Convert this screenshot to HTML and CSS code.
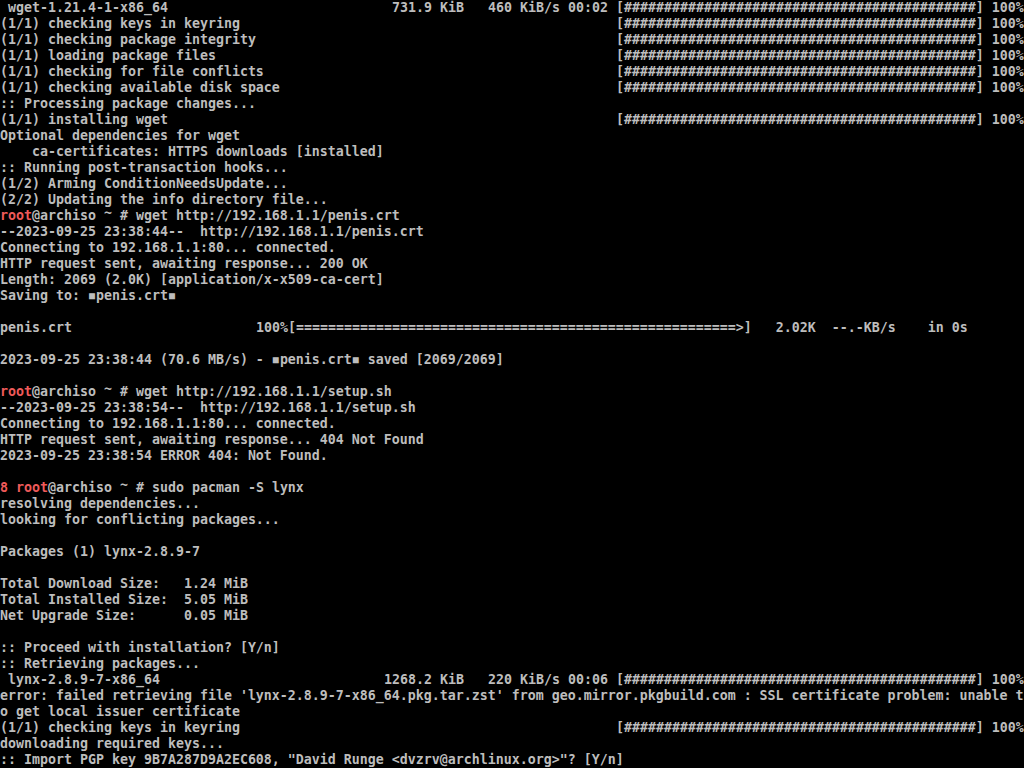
FILE: index.html
```html
<!DOCTYPE html>
<html>
<head>
<meta charset="utf-8">
<link rel="stylesheet" href="styles.css">
</head>
<body>
<main class="tty">
  <div class="row"><span class="name"> wget-1.21.4-1-x86_64</span><span class="size">731.9 KiB</span><span class="rate">   460 KiB/s 00:02 </span><span class="bar">[############################################] 100%</span></div>
  <div class="row"><span class="lbl">(1/1) checking keys in keyring</span><span class="bar">[############################################] 100%</span></div>
  <div class="row"><span class="lbl">(1/1) checking package integrity</span><span class="bar">[############################################] 100%</span></div>
  <div class="row"><span class="lbl">(1/1) loading package files</span><span class="bar">[############################################] 100%</span></div>
  <div class="row"><span class="lbl">(1/1) checking for file conflicts</span><span class="bar">[############################################] 100%</span></div>
  <div class="row"><span class="lbl">(1/1) checking available disk space</span><span class="bar">[############################################] 100%</span></div>
  <div class="row">:: Processing package changes...</div>
  <div class="row"><span class="lbl">(1/1) installing wget</span><span class="bar">[############################################] 100%</span></div>
  <div class="row">Optional dependencies for wget</div>
  <div class="row">    ca-certificates: HTTPS downloads [installed]</div>
  <div class="row">:: Running post-transaction hooks...</div>
  <div class="row">(1/2) Arming ConditionNeedsUpdate...</div>
  <div class="row">(2/2) Updating the info directory file...</div>
  <div class="row"><span class="red">root</span>@archiso <span class="tilde">~</span> # wget http://192.168.1.1/penis.crt</div>
  <div class="row">--2023-09-25 23:38:44--  http://192.168.1.1/penis.crt</div>
  <div class="row">Connecting to 192.168.1.1:80... connected.</div>
  <div class="row">HTTP request sent, awaiting response... 200 OK</div>
  <div class="row">Length: 2069 (2.0K) [application/x-x509-ca-cert]</div>
  <div class="row">Saving to: <span class="q">■</span>penis.crt<span class="q">■</span></div>
  <div class="row"></div>
  <div class="row"><span class="fname">penis.crt</span>100%[=======================================================&gt;]   2.02K  --.-KB/s    in 0s</div>
  <div class="row"></div>
  <div class="row">2023-09-25 23:38:44 (70.6 MB/s) - <span class="q">■</span>penis.crt<span class="q">■</span> saved [2069/2069]</div>
  <div class="row"></div>
  <div class="row"><span class="red">root</span>@archiso <span class="tilde">~</span> # wget http://192.168.1.1/setup.sh</div>
  <div class="row">--2023-09-25 23:38:54--  http://192.168.1.1/setup.sh</div>
  <div class="row">Connecting to 192.168.1.1:80... connected.</div>
  <div class="row">HTTP request sent, awaiting response... 404 Not Found</div>
  <div class="row">2023-09-25 23:38:54 ERROR 404: Not Found.</div>
  <div class="row"></div>
  <div class="row"><span class="red">8 root</span>@archiso <span class="tilde">~</span> # sudo pacman -S lynx</div>
  <div class="row">resolving dependencies...</div>
  <div class="row">looking for conflicting packages...</div>
  <div class="row"></div>
  <div class="row">Packages (1) lynx-2.8.9-7</div>
  <div class="row"></div>
  <div class="row">Total Download Size:   1.24 MiB</div>
  <div class="row">Total Installed Size:  5.05 MiB</div>
  <div class="row">Net Upgrade Size:      0.05 MiB</div>
  <div class="row"></div>
  <div class="row">:: Proceed with installation? [Y/n]</div>
  <div class="row">:: Retrieving packages...</div>
  <div class="row"><span class="name"> lynx-2.8.9-7-x86_64</span><span class="size">1268.2 KiB</span><span class="rate">   220 KiB/s 00:06 </span><span class="bar">[############################################] 100%</span></div>
  <div class="row">error: failed retrieving file 'lynx-2.8.9-7-x86_64.pkg.tar.zst' from geo.mirror.pkgbuild.com : SSL certificate problem: unable t</div>
  <div class="row">o get local issuer certificate</div>
  <div class="row"><span class="lbl">(1/1) checking keys in keyring</span><span class="bar">[############################################] 100%</span></div>
  <div class="row">downloading required keys...</div>
  <div class="row">:: Import PGP key 9B7A287D9A2EC608, "David Runge &lt;dvzrv@archlinux.org&gt;"? [Y/n]</div>
</main>
</body>
</html>
```

FILE: styles.css
```css
html, body {
  margin: 0;
  padding: 0;
  background: #000;
}
.tty {
  width: 1024px;
  height: 768px;
  overflow: hidden;
  background: #000;
  color: #bdbdbd;
  font-family: "DejaVu Sans Mono", "Liberation Mono", monospace;
  font-size: 13.29px;
  font-weight: bold;
  display: flex;
  flex-direction: column;
}
.row {
  display: flex;
  height: 16px;
  line-height: 16px;
  white-space: pre;
  flex: 0 0 16px;
}
.lbl {
  flex: 0 0 616px;
}
.name {
  flex: 0 0 384px;
}
.size {
  flex: 0 0 80px;
  text-align: right;
}
.rate {
  flex: 0 0 152px;
}
.fname {
  flex: 0 0 256px;
}
.red {
  color: #ee5a5a;
}
.q {
  display: inline-block;
  width: 8px;
  font-size: 10px;
  text-align: center;
}
.tilde {
  position: relative;
  top: -3px;
}
```
